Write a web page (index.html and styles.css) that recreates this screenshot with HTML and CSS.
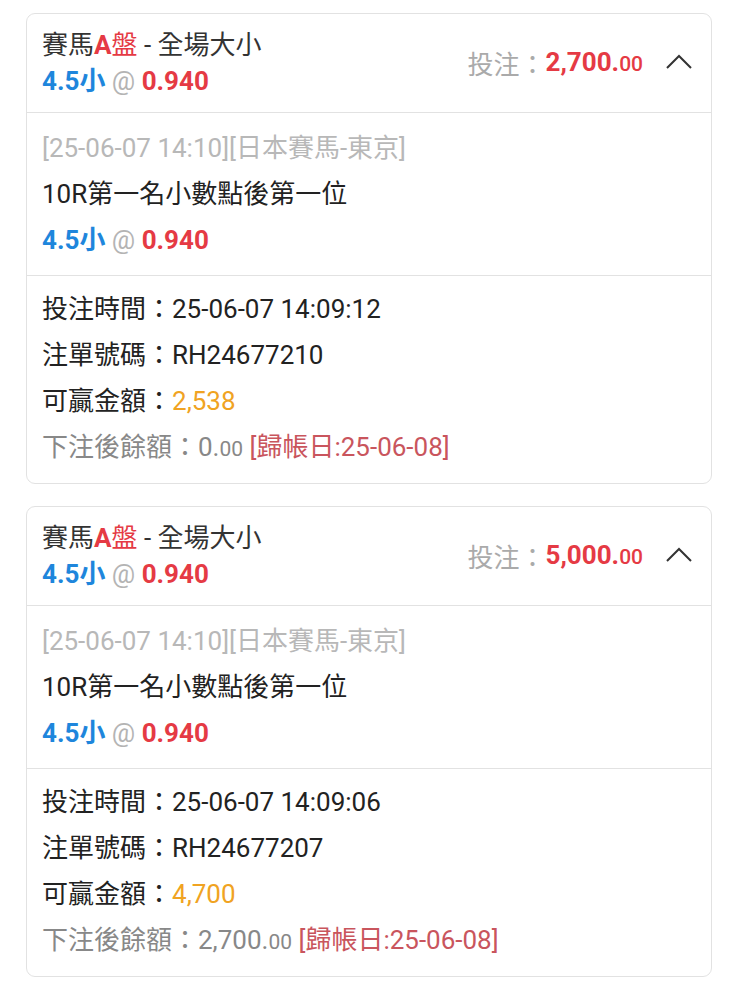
FILE: index.html
```html
<!DOCTYPE html>
<html lang="zh-Hant">
<head>
    <meta charset="UTF-8">
    <meta name="viewport" content="width=device-width, initial-scale=1.0">
    <title>注單</title>
    <link rel="stylesheet" href="styles.css">
</head>
<body>
    <div class="bet-list">
        <!-- Bet 1 -->
        <div class="bet-card">
            <div class="bet-head">
                <div class="head-left">
                    <div class="line">賽馬<span class="red"><b>A</b>盤</span> - 全場大小</div>
                    <div class="line"><span class="pick">4.5小</span> <span class="at">@</span> <span class="odds">0.940</span></div>
                </div>
                <div class="head-right">
                    <span class="stake-label">投注：</span><span class="stake">2,700.<small>00</small></span>
                    <svg class="chevron" width="28" height="16" viewBox="0 0 28 16"><path d="M2 14 L14 2 L26 14" fill="none" stroke="#333" stroke-width="2"/></svg>
                </div>
            </div>
            <div class="bet-section">
                <div class="row muted-light">[25-06-07 14:10][日本賽馬-東京]</div>
                <div class="row">10R第一名小數點後第一位</div>
                <div class="row"><span class="pick">4.5小</span> <span class="at">@</span> <span class="odds">0.940</span></div>
            </div>
            <div class="bet-section info">
                <div class="row">投注時間：25-06-07 14:09:12</div>
                <div class="row">注單號碼：RH24677210</div>
                <div class="row">可贏金額：<span class="gold">2,538</span></div>
                <div class="row muted">下注後餘額：0.<small>00</small> <span class="settle">[歸帳日:25-06-08]</span></div>
            </div>
        </div>

        <!-- Bet 2 -->
        <div class="bet-card">
            <div class="bet-head">
                <div class="head-left">
                    <div class="line">賽馬<span class="red"><b>A</b>盤</span> - 全場大小</div>
                    <div class="line"><span class="pick">4.5小</span> <span class="at">@</span> <span class="odds">0.940</span></div>
                </div>
                <div class="head-right">
                    <span class="stake-label">投注：</span><span class="stake">5,000.<small>00</small></span>
                    <svg class="chevron" width="28" height="16" viewBox="0 0 28 16"><path d="M2 14 L14 2 L26 14" fill="none" stroke="#333" stroke-width="2"/></svg>
                </div>
            </div>
            <div class="bet-section">
                <div class="row muted-light">[25-06-07 14:10][日本賽馬-東京]</div>
                <div class="row">10R第一名小數點後第一位</div>
                <div class="row"><span class="pick">4.5小</span> <span class="at">@</span> <span class="odds">0.940</span></div>
            </div>
            <div class="bet-section info">
                <div class="row">投注時間：25-06-07 14:09:06</div>
                <div class="row">注單號碼：RH24677207</div>
                <div class="row">可贏金額：<span class="gold">4,700</span></div>
                <div class="row muted">下注後餘額：2,700.<small>00</small> <span class="settle">[歸帳日:25-06-08]</span></div>
            </div>
        </div>
    </div>
</body>
</html>
```

FILE: styles.css
```css
* {
    margin: 0;
    padding: 0;
    box-sizing: border-box;
}

body {
    font-family: Roboto, "Noto Sans CJK TC", sans-serif;
    background: #fff;
    color: #222;
    font-size: 26px;
}

.bet-list {
    display: flex;
    flex-direction: column;
    gap: 22px;
    padding: 13px 27px 0 26px;
}

.bet-card {
    border: 1px solid #e2e2e2;
    border-radius: 9px;
    background: #fff;
}

.bet-head {
    display: flex;
    justify-content: space-between;
    align-items: center;
    padding: 13px 18px 13px 15px;
    border-bottom: 1px solid #e2e2e2;
}

.head-left .line {
    line-height: 36px;
    color: #333;
}

.head-right {
    display: flex;
    align-items: center;
    margin-top: -2px;
}

.stake-label {
    color: #aaa;
}

.stake {
    color: #e53a44;
    font-weight: bold;
}

.stake small {
    font-size: 21px;
    font-weight: 500;
}

.chevron {
    margin-left: 22px;
}

.bet-section {
    padding: 12px 15px 12px;
    border-bottom: 1px solid #e2e2e2;
}

.bet-section.info {
    border-bottom: none;
    padding-top: 10px;
    padding-bottom: 11px;
}

.row {
    line-height: 46px;
    color: #222;
}

.red {
    color: #e53a44;
}

.pick {
    color: #1e86dc;
    font-weight: bold;
}

.at {
    color: #b4b4b4;
}

.odds {
    color: #e53a44;
    font-weight: bold;
}

.muted-light {
    color: #b8b8b8;
}

.muted {
    color: #888;
}

.muted small {
    font-size: 21px;
}

.gold {
    color: #f0a322;
}

.settle {
    color: #c9555d;
}
```
